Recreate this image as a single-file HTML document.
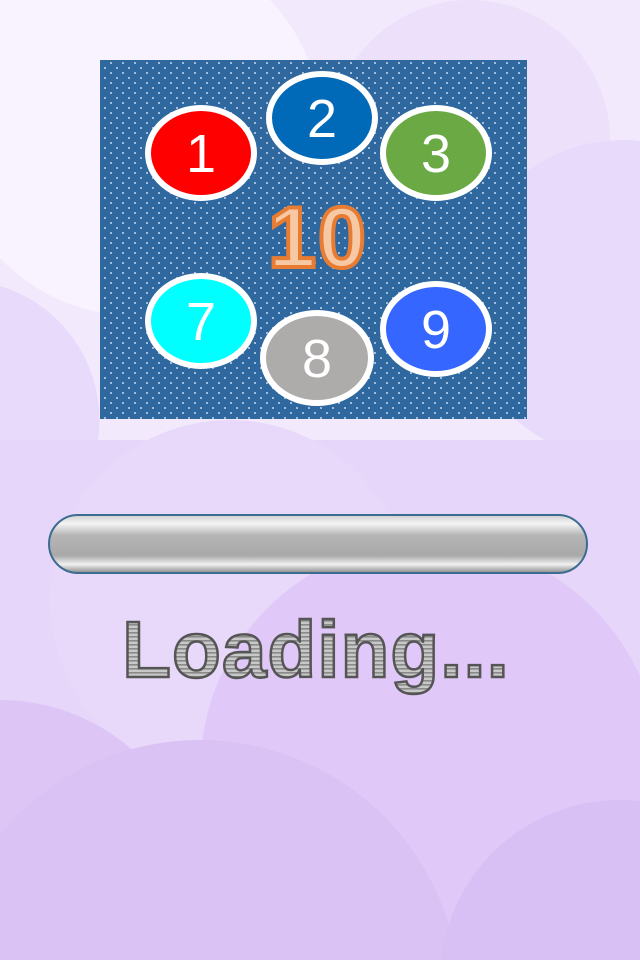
<!DOCTYPE html>
<html><head><style>
html,body{margin:0;padding:0;width:640px;height:960px;overflow:hidden}
body{position:relative;background:#eadcfb;font-family:"Liberation Sans",sans-serif}
svg{display:block}
</style></head><body>
<svg width="640" height="960" style="position:absolute;left:0;top:0" overflow="hidden">
<defs>
<pattern id="dots" width="12" height="10" patternUnits="userSpaceOnUse">
<rect width="12" height="10" fill="#2e689f"/>
<circle cx="3" cy="3" r="1" fill="#c9d6ee"/>
<circle cx="9" cy="8" r="1" fill="#c9d6ee"/>
</pattern>
<linearGradient id="bar" x1="0" y1="0" x2="0" y2="1">
<stop offset="0" stop-color="#d0d0d0"/><stop offset="0.15" stop-color="#f4f4f4"/>
<stop offset="0.35" stop-color="#b5b5b5"/><stop offset="0.7" stop-color="#a9a9a9"/>
<stop offset="0.85" stop-color="#f0f0f0"/><stop offset="1" stop-color="#8a8a8a"/>
</linearGradient>
<pattern id="stripe" width="4" height="4" patternUnits="userSpaceOnUse">
<rect width="4" height="4" fill="#c8c8c8"/><rect width="4" height="1.6" fill="#8a8a8a"/>
</pattern>
</defs>
<rect width="640" height="960" fill="#f2eafc"/>
<path d="M0 0 L270 0 A150 150 0 0 1 0 258 Z" fill="#f8f3fe"/>
<path d="M330 140 A140 140 0 0 1 610 140 A140 140 0 0 1 330 140 Z" fill="#ece0fb"/>
<path d="M640 141 A160 160 0 1 0 640 459 Z" fill="#e8dafa"/>
<path d="M0 286 A140 140 0 0 1 0 554 Z" fill="#e8dafa"/>
<rect x="0" y="440" width="640" height="520" fill="#e6d6fa"/>
<circle cx="230" cy="600" r="180" fill="#e8d9fa"/>
<path d="M300 960 A230 230 0 1 1 640 676 L640 960 Z" fill="#e0c9f8"/>
<path d="M0 960 L0 700 A200 200 0 0 1 191 960 Z" fill="#ddc6f6"/>
<path d="M0 960 L0 834 A260 260 0 0 1 457 960 Z" fill="#dbc2f5"/>
<path d="M441 960 A180 180 0 0 1 640 801 L640 960 Z" fill="#d9c0f4"/>
<rect x="100" y="60" width="427" height="359" fill="url(#dots)"/>
<g stroke="#fff" stroke-width="6">
<ellipse cx="201" cy="153" rx="53" ry="45" fill="#ff0000"/>
<ellipse cx="322" cy="118" rx="53" ry="44" fill="#0069b8"/>
<ellipse cx="436" cy="153" rx="53" ry="45" fill="#6aa944"/>
<ellipse cx="201" cy="321" rx="53" ry="45" fill="#00ffff"/>
<ellipse cx="317" cy="358" rx="54" ry="45" fill="#aeabab"/>
<ellipse cx="436" cy="329" rx="53" ry="45" fill="#3566ff"/>
</g>
<g fill="#fff" font-family="Liberation Sans" font-size="54" text-anchor="middle">
<text x="201" y="172">1</text><text x="322" y="137">2</text><text x="436" y="172">3</text>
<text x="201" y="340">7</text><text x="317" y="377">8</text><text x="436" y="348">9</text>
</g>
<text x="318" y="267" text-anchor="middle" font-size="86" font-weight="bold" letter-spacing="2" fill="#f6c8a4" stroke="#e87c33" stroke-width="4">10</text>
<rect x="49" y="515" width="538" height="58" rx="29" fill="url(#bar)" stroke="#3d6c92" stroke-width="2"/>
<text x="316" y="677" text-anchor="middle" font-size="80" font-weight="bold" fill="url(#stripe)" stroke="#555" stroke-width="2.5" letter-spacing="1">Loading...</text>
</svg>
</body></html>
